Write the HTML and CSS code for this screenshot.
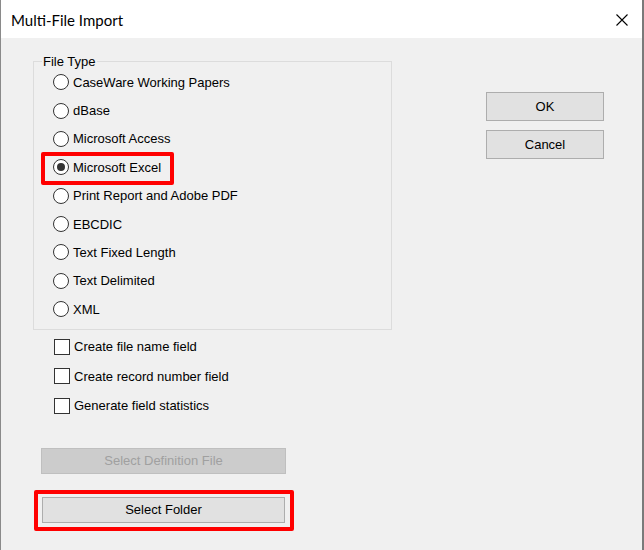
FILE: index.html
```html
<!DOCTYPE html>
<html>
    <head>
        <meta charset="utf-8" />
        <title>Multi-File Import</title>
        <link rel="stylesheet" href="styles.css">
    </head>
    <body>
        <div class="window">
            <div class="titlebar">
                <span class="title">Multi-File Import</span>
                <svg class="close" width="12" height="12" viewBox="0 0 12 12">
                    <path d="M0.5 0.5 L11.5 11.5 M11.5 0.5 L0.5 11.5" stroke="#000" stroke-width="1.1" fill="none" />
                </svg>
            </div>
            <div class="dialog">
                <div class="left">
                    <fieldset class="group">
                        <legend>File Type</legend>
                        <div class="radios">
                            <label class="option"><span class="radio"></span>CaseWare Working Papers</label>
                            <label class="option"><span class="radio"></span>dBase</label>
                            <label class="option"><span class="radio"></span>Microsoft Access</label>
                            <label class="option marked"><span class="radio checked"></span>Microsoft Excel</label>
                            <label class="option"><span class="radio"></span>Print Report and Adobe PDF</label>
                            <label class="option"><span class="radio"></span>EBCDIC</label>
                            <label class="option"><span class="radio"></span>Text Fixed Length</label>
                            <label class="option"><span class="radio"></span>Text Delimited</label>
                            <label class="option"><span class="radio"></span>XML</label>
                        </div>
                    </fieldset>
                    <div class="checks">
                        <label class="option"><span class="check"></span>Create file name field</label>
                        <label class="option"><span class="check"></span>Create record number field</label>
                        <label class="option"><span class="check"></span>Generate field statistics</label>
                    </div>
                    <div class="btn wide disabled">Select Definition File</div>
                    <div class="btn folder marked-btn">Select Folder</div>
                </div>
                <div class="right">
                    <div class="btn small">OK</div>
                    <div class="btn small">Cancel</div>
                </div>
            </div>
        </div>
    </body>
</html>
```

FILE: styles.css
```css
html {
    margin: 0px;
    padding: 0px;
}
body {
    margin: 0px;
    padding: 0px;
    font-family: 'Liberation Sans', Arial, sans-serif;
    font-size: 13px;
    color: #000;
    background-color: #f0f0f0;
}
.window {
    box-sizing: border-box;
    width: 644px;
    height: 550px;
    border-left: 1px solid #8a8a8a;
    border-right: 2px solid #7a7a7a;
    background-color: #f0f0f0;
    overflow: hidden;
}
.titlebar {
    height: 38px;
    background-color: #fff;
    display: flex;
    align-items: center;
    justify-content: space-between;
    padding-left: 10px;
    padding-right: 14px;
}
.title {
    font-family: 'Lato', 'Liberation Sans', sans-serif;
    font-size: 15px;
    color: #000;
    padding-top: 1px;
}
.close {
    display: block;
    margin-top: 1px;
}
.dialog {
    display: flex;
    padding-left: 32px;
}
.left {
    width: 359px;
}
.group {
    box-sizing: border-box;
    margin: 0px;
    margin-top: 17px;
    padding: 0px 0px 5px 8px;
    border: 1px solid #dcdcdc;
    height: 275px;
}
.group legend {
    padding: 0px 1px;
    line-height: 13px;
}
.radios {
    margin-left: 11px;
}
.option {
    display: flex;
    align-items: center;
    gap: 4px;
    height: 28.375px;
    position: relative;
    width: max-content;
}
.radio {
    box-sizing: border-box;
    width: 16px;
    height: 16px;
    border: 1px solid #333;
    border-radius: 50%;
    background-color: #fff;
    display: flex;
    align-items: center;
    justify-content: center;
}
.radio.checked::before {
    content: '';
    width: 8px;
    height: 8px;
    border-radius: 50%;
    background-color: #333;
}
.marked::after {
    content: '';
    position: absolute;
    left: -12px;
    right: -13px;
    top: -1px;
    bottom: -3px;
    border: 4px solid #ff0000;
    border-radius: 2px;
}
.checks {
    margin-top: 2px;
    margin-left: 21px;
}
.checks .option {
    height: 29.5px;
}
.check {
    box-sizing: border-box;
    width: 16px;
    height: 16px;
    border: 1px solid #333;
    background-color: #fff;
}
.btn {
    box-sizing: border-box;
    display: flex;
    align-items: center;
    justify-content: center;
    background-color: #e1e1e1;
    border: 1px solid #adadad;
}
.wide {
    width: 245px;
    height: 26px;
    margin-top: 27px;
    margin-left: 8px;
}
.disabled {
    background-color: #cccccc;
    border-color: #bfbfbf;
    color: #a0a0a0;
}
.folder {
    width: 243px;
    height: 26px;
    margin-top: 23px;
    margin-left: 9px;
    position: relative;
}
.marked-btn::after {
    content: '';
    position: absolute;
    left: -9px;
    right: -10px;
    top: -8px;
    bottom: -9px;
    border: 4px solid #ff0000;
    border-radius: 2px;
}
.right {
    margin-left: 94px;
    padding-top: 54px;
    display: flex;
    flex-direction: column;
    gap: 9px;
}
.small {
    width: 118px;
    height: 29px;
}
```
